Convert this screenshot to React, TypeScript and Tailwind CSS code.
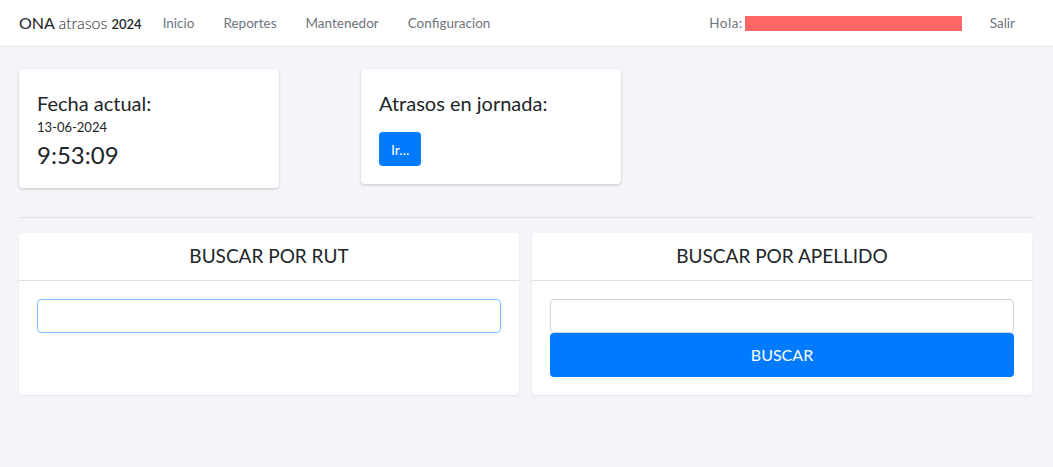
export default function App() {
  return (
    <div
      className="min-h-screen bg-[#f4f5f9] text-[#212529]"
      style={{ fontFamily: "Lato, 'Noto Sans', sans-serif" }}
    >
      <nav className="h-[47px] bg-white border-b border-[#e6e8ee] flex items-center px-[19px]">
        <div className="text-[16px] text-[#212529] mr-[21px]">
          <span>ONA</span>{" "}
          <span className="font-light">atrasos</span>{" "}
          <span className="text-[13px] font-semibold">2024</span>
        </div>
        <ul className="flex gap-[29px] text-[13.5px] text-[#6c757d]">
          <li>Inicio</li>
          <li>Reportes</li>
          <li>Mantenedor</li>
          <li>Configuracion</li>
        </ul>
        <div className="ml-auto flex items-center text-[13.5px] text-[#6c757d]">
          <span className="tracking-[0.5px]">Hola:</span>
          <span className="ml-[2px] w-[217px] h-[15px] bg-[#ff6666] inline-block"></span>
          <span className="ml-[28px] mr-[19px]">Salir</span>
        </div>
      </nav>

      <div className="px-[19px] pt-[22px]">
        <div className="flex gap-[82px]">
          <div className="w-[260px] h-[119px] bg-white rounded shadow-[0_1px_3px_rgba(0,0,0,0.2)] px-[18px] pt-[20px]">
            <div className="text-[20px] leading-[28px]">Fecha actual:</div>
            <div className="text-[13px] leading-[18px] mt-[1px]">13-06-2024</div>
            <div className="text-[24px] leading-[30px] mt-[4px]">9:53:09</div>
          </div>
          <div className="w-[260px] h-[115px] bg-white rounded shadow-[0_1px_3px_rgba(0,0,0,0.2)] px-[18px] pt-[20px]">
            <div className="text-[20px] leading-[28px]">Atrasos en jornada:</div>
            <button className="mt-[15px] h-[34px] px-[12px] rounded bg-[#007bff] text-white text-[14px]">
              Ir...
            </button>
          </div>
        </div>

        <hr className="mt-[29px] border-t border-[#dfe1e6]" />

        <div className="flex gap-[13px] mt-[15px] w-[1013px]">
          <div className="w-[500px] h-[162px] bg-white rounded shadow-[0_1px_2px_rgba(0,0,0,0.08)]">
            <div className="h-[48px] border-b border-[#dfdfdf] flex items-center justify-center text-[19px]">
              BUSCAR POR RUT
            </div>
            <div className="px-[18px] pt-[18px]">
              <input className="w-full h-[34px] rounded border border-[#80bdff] outline-none" />
            </div>
          </div>
          <div className="w-[500px] h-[162px] bg-white rounded shadow-[0_1px_2px_rgba(0,0,0,0.08)]">
            <div className="h-[48px] border-b border-[#dfdfdf] flex items-center justify-center text-[19px]">
              BUSCAR POR APELLIDO
            </div>
            <div className="px-[18px] pt-[18px]">
              <input className="w-full h-[34px] rounded border border-[#ced4da] outline-none" />
              <button className="w-full h-[44px] rounded bg-[#007bff] text-white text-[16px]">
                BUSCAR
              </button>
            </div>
          </div>
        </div>
      </div>
    </div>
  );
}
